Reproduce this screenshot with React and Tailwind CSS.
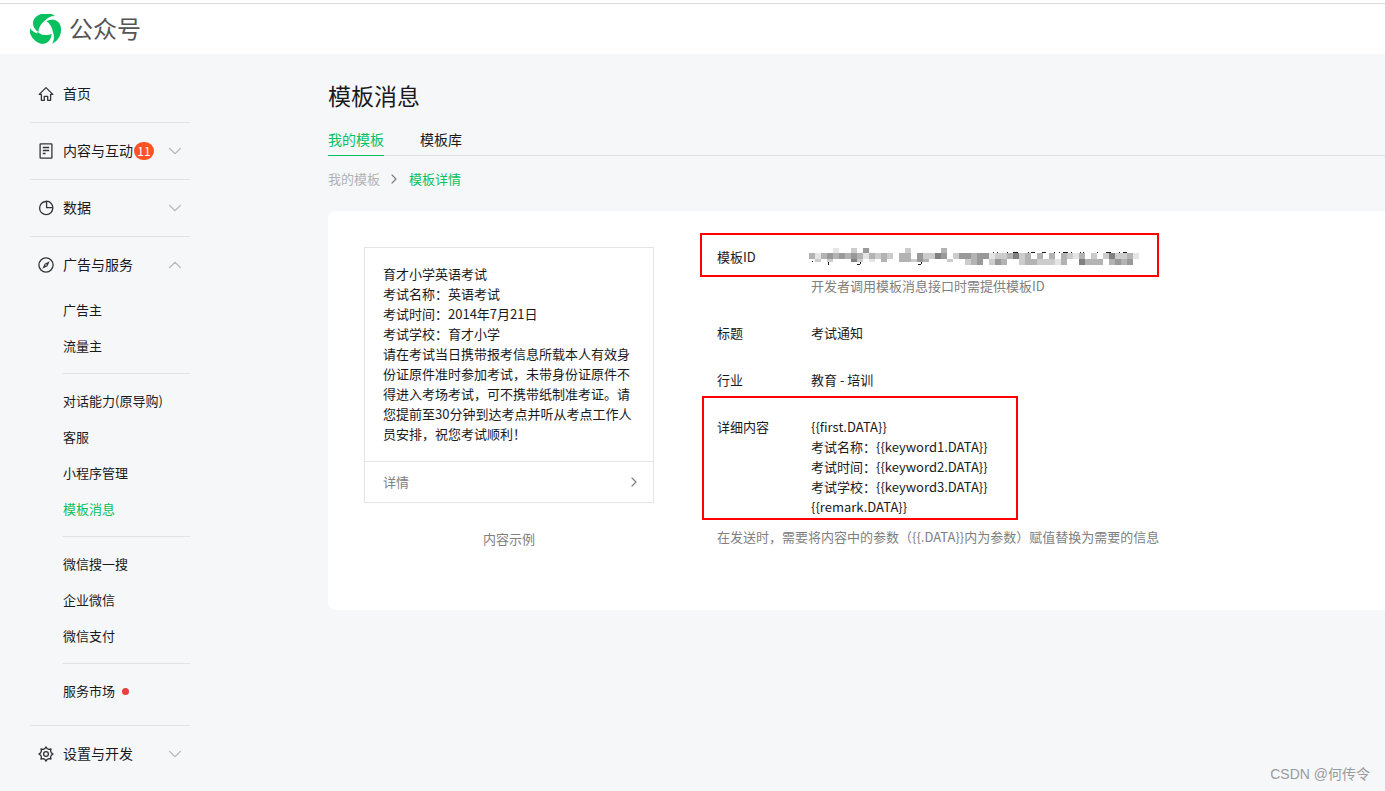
import React, { useState } from "react";
import { ChevronDown, ChevronRight, ChevronUp } from "lucide-react";

const subGroups = [
  ["广告主", "流量主"],
  ["对话能力(原导购)", "客服", "小程序管理", "模板消息"],
  ["微信搜一搜", "企业微信", "微信支付"],
  ["服务市场"],
];

const exampleText = [
  "育才小学英语考试",
  "考试名称：英语考试",
  "考试时间：2014年7月21日",
  "考试学校：育才小学",
  "请在考试当日携带报考信息所载本人有效身份证原件准时参加考试，未带身份证原件不得进入考场考试，可不携带纸制准考证。请您提前至30分钟到达考点并听从考点工作人员安排，祝您考试顺利！",
];

const detailLines = [
  "{{first.DATA}}",
  "考试名称：{{keyword1.DATA}}",
  "考试时间：{{keyword2.DATA}}",
  "考试学校：{{keyword3.DATA}}",
  "{{remark.DATA}}",
];

// one letter per 6px cell, "." is empty
const shades = { a: "#808080", b: "#999999", c: "#b3b3b3", d: "#cccccc", e: "#e5e5e5" };

const mosaic = [
  { x: 0, y: 0, h: 5, cells: "....e..d.b......d.....c" },
  { x: 0, y: 5, h: 6, cells: "cecbcbcbcecdcd.cc.bddab.d.b" },
  { x: 0, y: 11, h: 3, cells: ".d.d...ad.e.c..ccdbc...d" },
  { x: 150, y: 5, h: 6, cells: "b.cbbeddcadc.c.c.cdec.d.daddce" },
  { x: 150, y: 11, h: 6, cells: ".dcb.dbc..dccdddec..accc.cbcb" },
];

// leftovers of the id which the mosaic does not cover: x, y, w, h
const specks = [
  [3, 13, 1, 1], [19, 14, 1, 3], [48, 16, 3, 1], [51, 14, 1, 2], [60, 13, 3, 1],
  [109, 16, 3, 1], [112, 14, 1, 2], [184, 4, 1, 1], [188, 4, 1, 1], [198, 4, 1, 1],
  [204, 4, 5, 1], [219, 4, 1, 1], [222, 4, 4, 1], [228, 5, 1, 1],
  [233, 4, 4, 1], [232, 5, 1, 1], [245, 4, 1, 1], [250, 4, 1, 1], [254, 4, 5, 1],
  [262, 4, 1, 1], [271, 4, 1, 1], [274, 4, 1, 1], [288, 4, 1, 1],
  [297, 4, 5, 1], [310, 4, 1, 1], [314, 4, 4, 1], [318, 5, 1, 1],
];

const blade = "M3-23C20-32 39-27 45-10c6 22-5 45-25 54 6-10 7-22 3-33C20-4 14-16 3-23z";

const Logo = () => (
  <svg viewBox="-46 -45 92 90" className="w-[31px] h-[30px]" fill="#07c160">
    <path d={blade} />
    <path d={blade} transform="rotate(-120)" />
    <path d={blade} transform="rotate(120)" />
    <path d="M-24 8-26 27-8 20z" />
  </svg>
);

const iconProps = {
  viewBox: "0 0 16 16",
  fill: "none",
  stroke: "#353535",
  strokeWidth: 1.3,
  className: "w-4 h-4 shrink-0",
};

const HomeIcon = () => (
  <svg {...iconProps}>
    <path d="M8 1.6 1.2 8.4h2.2v5.9h2.9v-4h3.4v4h2.9V8.4h2.2z" strokeLinejoin="round" />
  </svg>
);

const DocIcon = () => (
  <svg {...iconProps}>
    <rect x="2.1" y="0.9" width="11.8" height="14.2" rx="0.6" />
    <path d="M4.8 4.5h6.4M4.8 7.5h6.4M4.8 10.5h2.8" />
  </svg>
);

const PieIcon = () => (
  <svg {...iconProps}>
    <path d="M8 1.5a6.6 6.6 0 1 0 6.8 6.6" />
    <path d="M8.6 1.2v6.5h6.2a6.4 6.4 0 0 0-6.2-6.5z" />
  </svg>
);

const CompassIcon = () => (
  <svg {...iconProps}>
    <circle cx="8" cy="8" r="7.1" />
    <path
      d="M11.6 4.3 9.5 9.3 4.4 11.7 6.6 6.7z"
      fill="#353535"
      stroke="none"
    />
    <circle cx="8" cy="8" r="0.8" fill="#f6f7f9" stroke="none" />
  </svg>
);

const GearIcon = () => (
  <svg {...iconProps} strokeLinejoin="round">
    <path d="M6.9 2.6 8 .9l1.1 1.7 1.9.8 2-.4-.4 2 .8 1.9L15.1 8l-1.7 1.1-.8 1.9.4 2-2-.4-1.9.8L8 15.1l-1.1-1.7-1.9-.8-2 .4.4-2-.8-1.9L.9 8l1.7-1.1.8-1.9-.4-2 2 .4z" />
    <circle cx="8" cy="8" r="2.4" />
  </svg>
);

const NavHead = ({ icon, label, badge, arrow, expanded, onClick }) => {
  const Arrow = expanded ? ChevronUp : ChevronDown;
  return (
    <button
      type="button"
      onClick={onClick}
      className="flex w-full h-14 items-center pl-2 pr-1 text-sm cursor-pointer"
    >
      {icon}
      <span className="ml-[9px] pb-0.5">{label}</span>
      {badge && (
        <span className="ml-px h-[18px] min-w-5 rounded-full bg-[#ff5226] text-xs leading-[18px] text-white text-center">
          {badge}
        </span>
      )}
      {arrow && <Arrow className="ml-auto w-[22px] h-[22px] text-[#b8b9bb]" strokeWidth={1.2} />}
    </button>
  );
};

const Sidebar = () => {
  const [open, setOpen] = useState(true);

  return (
    <nav className="w-40 shrink-0 pt-3">
      <ul className="divide-y divide-[#e1e2e4]">
        <li>
          <NavHead icon={<HomeIcon />} label="首页" />
        </li>
        <li>
          <NavHead icon={<DocIcon />} label="内容与互动" badge="11" arrow />
        </li>
        <li>
          <NavHead icon={<PieIcon />} label="数据" arrow />
        </li>
        <li>
          <NavHead
            icon={<CompassIcon />}
            label="广告与服务"
            arrow
            expanded={open}
            onClick={() => setOpen((prev) => !prev)}
          />
          {open && (
            <div className="-mt-px pl-[33px] pb-4 divide-y divide-[#e1e2e4] text-[13px]">
              {subGroups.map((group) => (
                <ul key={group[0]} className="py-[9px] first:pt-0 last:pb-0">
                  {group.map((name) => (
                    <li key={name}>
                      <a
                        href="#"
                        className={
                          name === "模板消息"
                            ? "flex h-9 items-center text-[#07c160]"
                            : "flex h-9 items-center"
                        }
                      >
                        {name}
                        {name === "服务市场" && (
                          <span className="ml-[7px] w-[7px] h-[7px] rounded-full bg-[#ea3f3c]" />
                        )}
                      </a>
                    </li>
                  ))}
                </ul>
              ))}
            </div>
          )}
        </li>
        <li>
          <NavHead icon={<GearIcon />} label="设置与开发" arrow />
        </li>
      </ul>
    </nav>
  );
};

const MaskedId = () => (
  <svg
    viewBox="0 0 330 17"
    width="330"
    height="17"
    shapeRendering="crispEdges"
    className="-ml-0.5"
  >
    {specks.map(([x, y, w, h], i) => (
      <rect key={i} x={x} y={y} width={w} height={h} fill="#1a1a1a" />
    ))}
    {mosaic.map((row) =>
      row.cells.split("").map((c, i) =>
        shades[c] ? (
          <rect
            key={`${row.x}-${row.y}-${i}`}
            x={row.x + i * 6}
            y={row.y}
            width={6}
            height={row.h}
            fill={shades[c]}
          />
        ) : null
      )
    )}
  </svg>
);

const Preview = () => (
  <div className="w-[290px] shrink-0">
    <div className="border border-[#e4e4e5]">
      <div className="px-[18px] pt-4 pb-[17px]">
        {exampleText.map((line) => (
          <p key={line}>{line}</p>
        ))}
      </div>
      <a
        href="#"
        className="flex h-[41px] items-center justify-between border-t border-[#e4e4e5] pl-[18px] pr-[11px] text-[#808080]"
      >
        详情
        <ChevronRight className="w-4 h-4" strokeWidth={1.8} />
      </a>
    </div>
    <p className="mt-[26px] text-center text-[#808080]">内容示例</p>
  </div>
);

const Row = ({ label, children }) => (
  <div className="flex">
    <dt className="w-[94px] shrink-0">{label}</dt>
    <dd>{children}</dd>
  </div>
);

const Detail = () => (
  <div className="relative">
    <dl className="flex flex-col gap-[27px]">
      <Row label="模板ID">
        <div className="h-5 pt-px">
          <MaskedId />
        </div>
        <p className="mt-[9px] text-[#808080]">开发者调用模板消息接口时需提供模板ID</p>
      </Row>
      <Row label="标题">考试通知</Row>
      <Row label="行业">教育 - 培训</Row>
      <Row label="详细内容">
        {detailLines.map((line) => (
          <p key={line}>{line}</p>
        ))}
      </Row>
    </dl>
    <p className="mt-[10px] text-[#808080]">
      在发送时，需要将内容中的参数（{"{{.DATA}}"}内为参数）赋值替换为需要的信息
    </p>
    {/* red marks */}
    <div className="absolute -left-[17px] -top-[14px] w-[459px] h-11 border-2 border-[#fe0000]" />
    <div className="absolute -left-[15px] top-[149px] w-[316px] h-[124px] border-2 border-[#fe0000]" />
  </div>
);

export default function App() {
  return (
    <div className="relative min-h-screen overflow-x-hidden bg-[#f6f7f9] text-[#1a1a1c] text-[13px] leading-5 font-['Noto_Sans_CJK_SC',sans-serif]">
      <header className="bg-white pt-[3px]">
        <div className="flex h-[51px] items-center gap-2 border-t border-[#d9d9d9] pl-[30px]">
          <Logo />
          <span className="pb-0.5 text-2xl text-[#555555]">公众号</span>
        </div>
      </header>

      <div className="flex pl-[30px]">
        <Sidebar />
        <main className="flex-1 min-w-0 ml-[138px] pt-[25px]">
          <h1 className="text-[23px] leading-8">模板消息</h1>
          <div className="mt-3 flex gap-9 border-b border-[#e1e2e4] text-sm">
            <a href="#" className="-mb-px h-[33px] pt-1.5 border-b border-[#07c160] text-[#07c160]">
              我的模板
            </a>
            <a href="#" className="h-8 pt-1.5">
              模板库
            </a>
          </div>
          <div className="mt-[13px] flex items-center">
            <a href="#" className="text-[#b2b2b2]">
              我的模板
            </a>
            <ChevronRight className="ml-1.5 mr-[7px] w-4 h-4 text-[#808080]" strokeWidth={1.8} />
            <span className="text-[#07c160]">模板详情</span>
          </div>

          <section className="mt-[22px] flex gap-[63px] rounded-l-lg bg-white px-9 pt-9 pb-[61px]">
            <Preview />
            <Detail />
          </section>
        </main>
      </div>

      <div className="absolute right-[15px] bottom-[7px] text-sm text-[#9b9b9c] font-['Liberation_Sans','Noto_Sans_CJK_SC',sans-serif]">
        CSDN @何传令
      </div>
    </div>
  );
}
